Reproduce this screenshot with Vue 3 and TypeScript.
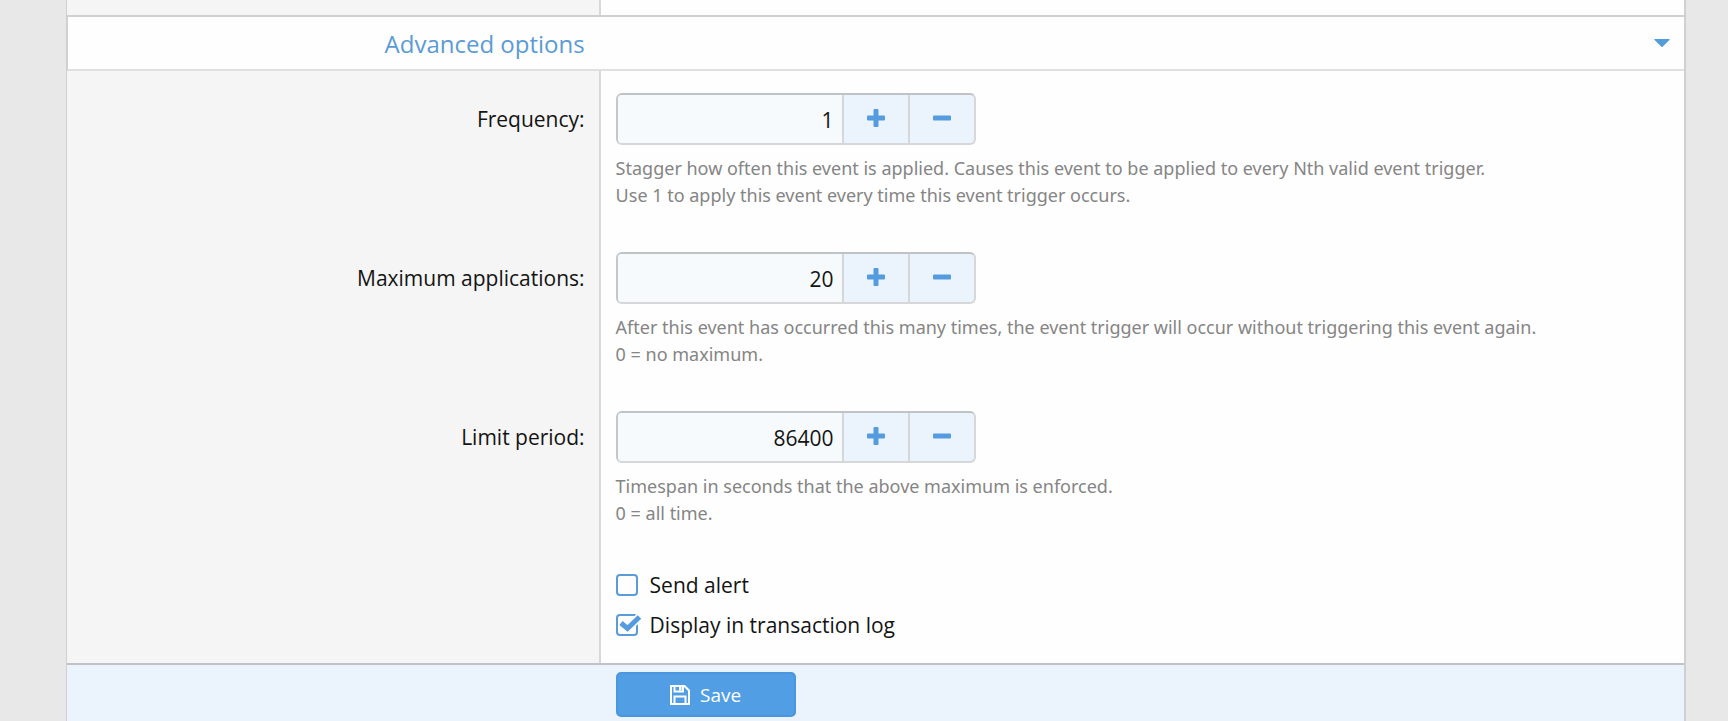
<script setup lang="ts">
import { ref } from 'vue'

interface NumberField {
  id: string
  label: string
  value: number
  hint: string[]
}

const fields = ref<NumberField[]>([
  {
    id: 'frequency',
    label: 'Frequency:',
    value: 1,
    hint: [
      'Stagger how often this event is applied. Causes this event to be applied to every Nth valid event trigger.',
      'Use 1 to apply this event every time this event trigger occurs.',
    ],
  },
  {
    id: 'max-applications',
    label: 'Maximum applications:',
    value: 20,
    hint: [
      'After this event has occurred this many times, the event trigger will occur without triggering this event again.',
      '0 = no maximum.',
    ],
  },
  {
    id: 'limit-period',
    label: 'Limit period:',
    value: 86400,
    hint: ['Timespan in seconds that the above maximum is enforced.', '0 = all time.'],
  },
])

const toggles = ref([
  { id: 'send-alert', label: 'Send alert', checked: false },
  { id: 'display-log', label: 'Display in transaction log', checked: true },
])

const open = ref(true)

function step(field: NumberField, amount: number) {
  field.value = Math.max(0, field.value + amount)
}
</script>

<template>
  <form class="panel" @submit.prevent>
    <div class="row row-previous">
      <div class="label-cell"></div>
      <div class="control-cell"></div>
    </div>

    <button class="section-header" type="button" :aria-expanded="open" @click="open = !open">
      <span class="section-title">Advanced options</span>
      <svg class="caret" viewBox="0 0 16 8" aria-hidden="true">
        <path d="M0.8 0H15.2Q16 0.2 15.4 0.9L8.6 7.7Q8 8.2 7.4 7.7L0.6 0.9Q0 0.2 0.8 0Z" />
      </svg>
    </button>

    <div v-show="open" class="section-body">
      <div v-for="field in fields" :key="field.id" class="row">
        <div class="label-cell">
          <label :for="field.id">{{ field.label }}</label>
        </div>
        <div class="control-cell">
          <div class="number-group">
            <input :id="field.id" v-model.number="field.value" type="number" min="0" />
            <button type="button" aria-label="Increase" @click="step(field, 1)">
              <svg viewBox="0 0 18 18" aria-hidden="true">
                <path
                  d="M7.5 0h3a1 1 0 0 1 1 1v5.500h5.500a1 1 0 0 1 1 1v3a1 1 0 0 1-1 1h-5.500v5.500a1 1 0 0 1-1 1h-3a1 1 0 0 1-1-1v-5.500h-5.500a1 1 0 0 1-1-1v-3a1 1 0 0 1 1-1h5.500v-5.500a1 1 0 0 1 1-1z"
                />
              </svg>
            </button>
            <button type="button" aria-label="Decrease" @click="step(field, -1)">
              <svg viewBox="0 0 18 18" aria-hidden="true">
                <rect x="0" y="6.500" width="18" height="5" rx="1" />
              </svg>
            </button>
          </div>
          <p class="hint">
            <span v-for="line in field.hint" :key="line">{{ line }}</span>
          </p>
        </div>
      </div>

      <div class="row row-toggles">
        <div class="label-cell"></div>
        <div class="control-cell">
          <label v-for="toggle in toggles" :key="toggle.id" class="toggle" :for="toggle.id">
            <span class="box">
              <input :id="toggle.id" v-model="toggle.checked" type="checkbox" />
              <svg class="tick" viewBox="0 0 26 22" aria-hidden="true">
                <path class="tick-gap" d="M5 9L11.500 14.500L23.500 3" />
                <path class="tick-mark" d="M5 9L11.500 14.500L23.500 3" />
              </svg>
            </span>
            <span>{{ toggle.label }}</span>
          </label>
        </div>
      </div>
    </div>

    <footer class="footer">
      <button class="save" type="submit">
        <svg viewBox="0 0 20 20" aria-hidden="true">
          <path d="M1 1h13.500l4.500 4.500v13.500h-18z" />
          <path d="M4.500 19v-7.500h11v7.500M4.500 1v5.500h8.500v-5.500" />
          <path class="shutter" d="M9 1.500h2.500v4h-2.500z" />
        </svg>
        <span>Save</span>
      </button>
    </footer>
  </form>
</template>

<style>
body {
  margin: 0;
  background: #e8e8e8;
}
</style>

<style scoped>
.panel {
  box-sizing: border-box;
  display: flex;
  flex-direction: column;
  min-height: 100vh;
  margin: 0 42px 0 66px;
  border-right: 2px solid #d0d0d0;
  border-left: 1px solid #d0d0d0;
  background: #fefefe;
  color: #141414;
  font-family: 'Segoe UI', 'Open Sans', 'Noto Sans', sans-serif;
  font-size: 21px;
  line-height: 30px;
}

button,
input {
  box-sizing: border-box;
  margin: 0;
  font: inherit;
}

button {
  cursor: pointer;
}

.row {
  display: grid;
  grid-template-columns: 33% 1fr;
}

.label-cell {
  padding: 33px 14px 0 16px;
  border-right: 2px solid #d8d8d8;
  background: #f5f5f5;
  text-align: right;
}

.control-cell {
  padding: 22px 15px 0;
}

.row-previous {
  height: 15px;
  overflow: hidden;
}

.section-header {
  display: flex;
  align-items: center;
  justify-content: space-between;
  width: 100%;
  height: 56px;
  padding: 0 14px 0 0;
  border: solid #d0d0d0;
  border-width: 2px 0 2px 1px;
  border-bottom-color: #e0e0e0;
  background: #fefefe;
  color: #5b9bd5;
  font-size: 24px;
}

.section-title {
  box-sizing: border-box;
  width: 33%;
  padding: 2px 12px 0 0;
  text-align: right;
}

.caret {
  width: 16px;
  height: 8px;
  fill: #549cdb;
}

.number-group {
  box-sizing: border-box;
  display: flex;
  width: 360px;
  max-width: 100%;
  height: 52px;
  overflow: hidden;
  border: 2px solid #d5d7d8;
  border-top-color: #c0c3c5;
  border-left-color: #c5c8ca;
  border-radius: 6px;
  background: #ebf4fd;
}

.number-group input {
  flex: 1;
  min-width: 0;
  padding: 2px 8px 0;
  border: 0;
  background: #f6fafd;
  color: #141414;
  text-align: right;
  appearance: textfield;
}

.number-group input::-webkit-inner-spin-button {
  display: none;
}

.number-group button {
  display: flex;
  align-items: center;
  justify-content: center;
  width: 66px;
  padding: 0 0 2px;
  border: 0;
  border-left: 2px solid #d5d8da;
  background: transparent;
}

.number-group svg {
  width: 18px;
  height: 18px;
  fill: #549cdf;
}

.hint {
  margin: 10px 0 21px;
  color: #858585;
  font-family: 'Segoe UI', 'Noto Sans', sans-serif;
  font-size: 18px;
  line-height: 27px;
}

.hint span {
  display: block;
}

.row-toggles .control-cell {
  padding-top: 17px;
  padding-bottom: 18px;
}

.toggle {
  display: flex;
  align-items: center;
  gap: 12px;
  width: fit-content;
  height: 40px;
}

.box {
  position: relative;
  display: flex;
}

.box input {
  width: 22px;
  height: 22px;
  border: 2px solid #5b9bd8;
  border-radius: 4px;
  background: #fefefe;
  appearance: none;
}

.tick {
  position: absolute;
  top: 0;
  left: 0;
  display: none;
  width: 26px;
  height: 22px;
  fill: none;
  pointer-events: none;
}

.box input:checked + .tick {
  display: block;
}

.tick-gap {
  stroke: #fefefe;
  stroke-width: 8;
}

.tick-mark {
  stroke: #549cdf;
  stroke-width: 5;
}

.footer {
  display: flex;
  flex: 1;
  align-items: flex-start;
  padding: 7px 15px 3px calc(33% + 15px);
  border-top: 2px solid #bfc3c7;
  background: #ebf4fd;
}

.save {
  display: flex;
  align-items: center;
  justify-content: center;
  gap: 10px;
  width: 180px;
  height: 45px;
  padding: 0;
  border: 2px solid #4b96dd;
  border-radius: 5px;
  background: #529ee5;
  color: #fff;
  font-size: 19px;
}

.save svg {
  width: 20px;
  height: 20px;
  fill: none;
  stroke: #fff;
  stroke-width: 2;
}

.save .shutter {
  fill: #fff;
  stroke: none;
}
</style>
